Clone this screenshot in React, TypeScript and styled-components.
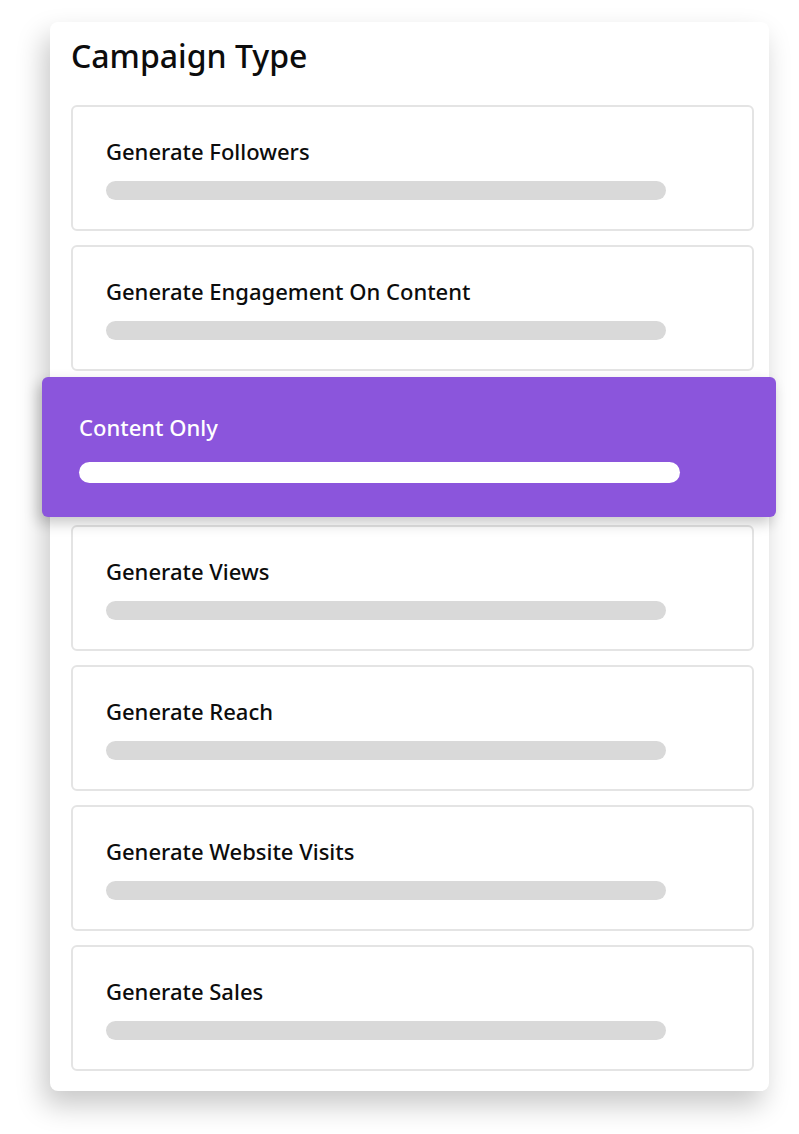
import styled, { createGlobalStyle } from 'styled-components';

const GlobalStyle = createGlobalStyle`
	html, body {
		margin: 0;
		padding: 0;
		background: #ffffff;
		font-family: 'Noto Sans', 'Open Sans', sans-serif;
	}
`;

const Page = styled.div`
	width: 799px;
	height: 1134px;
	padding: 22px 0 0 50px;
	box-sizing: border-box;
`;

const Card = styled.div`
	width: 719px;
	height: 1069px;
	box-sizing: border-box;
	background: #ffffff;
	border-radius: 8px;
	box-shadow: -6px 14px 28px rgba(0, 0, 0, 0.22);
	padding: 12px 15px 0 21px;
	display: flex;
	flex-direction: column;
`;

const Title = styled.h1`
	margin: 0 0 27px 0;
	font-size: 32px;
	line-height: 44px;
	font-weight: 500;
	color: #0c0c0c;
`;

const List = styled.div`
	display: flex;
	flex-direction: column;
	gap: 14px;
`;

const Item = styled.div<{ $active?: boolean }>`
	box-sizing: border-box;
	height: ${(p) => (p.$active ? '140px' : '126px')};
	margin: ${(p) => (p.$active ? '-8px -22px -6px -29px' : '0')};
	padding: ${(p) => (p.$active ? '35px 0 0 37px' : '29px 0 0 33px')};
	border: ${(p) => (p.$active ? 'none' : '2px solid #e4e4e4')};
	border-radius: 6px;
	background: ${(p) => (p.$active ? '#8b55dc' : '#ffffff')};
	box-shadow: ${(p) => (p.$active ? '-4px 6px 14px rgba(0, 0, 0, 0.22)' : 'none')};
	position: relative;
	z-index: ${(p) => (p.$active ? 1 : 0)};
`;

const Label = styled.div<{ $active?: boolean }>`
	font-size: 22px;
	line-height: 30px;
	font-weight: 500;
	color: ${(p) => (p.$active ? '#ffffff' : '#0c0c0c')};
	white-space: nowrap;
`;

const Bar = styled.div<{ $active?: boolean }>`
	margin-top: ${(p) => (p.$active ? '20px' : '15px')};
	width: ${(p) => (p.$active ? '601px' : '560px')};
	height: ${(p) => (p.$active ? '21px' : '19px')};
	border-radius: 12px;
	background: ${(p) => (p.$active ? '#ffffff' : '#d9d9d9')};
`;

const items = [
	'Generate Followers',
	'Generate Engagement On Content',
	'Content Only',
	'Generate Views',
	'Generate Reach',
	'Generate Website Visits',
	'Generate Sales',
];

function App() {
	const selected = 'Content Only';

	return (
		<Page>
			<GlobalStyle />
			<Card>
				<Title>Campaign Type</Title>
				<List>
					{items.map((name) => {
						const active = name === selected;
						return (
							<Item key={name} $active={active}>
								<Label $active={active}>{name}</Label>
								<Bar $active={active} />
							</Item>
						);
					})}
				</List>
			</Card>
		</Page>
	);
}

export default App;
